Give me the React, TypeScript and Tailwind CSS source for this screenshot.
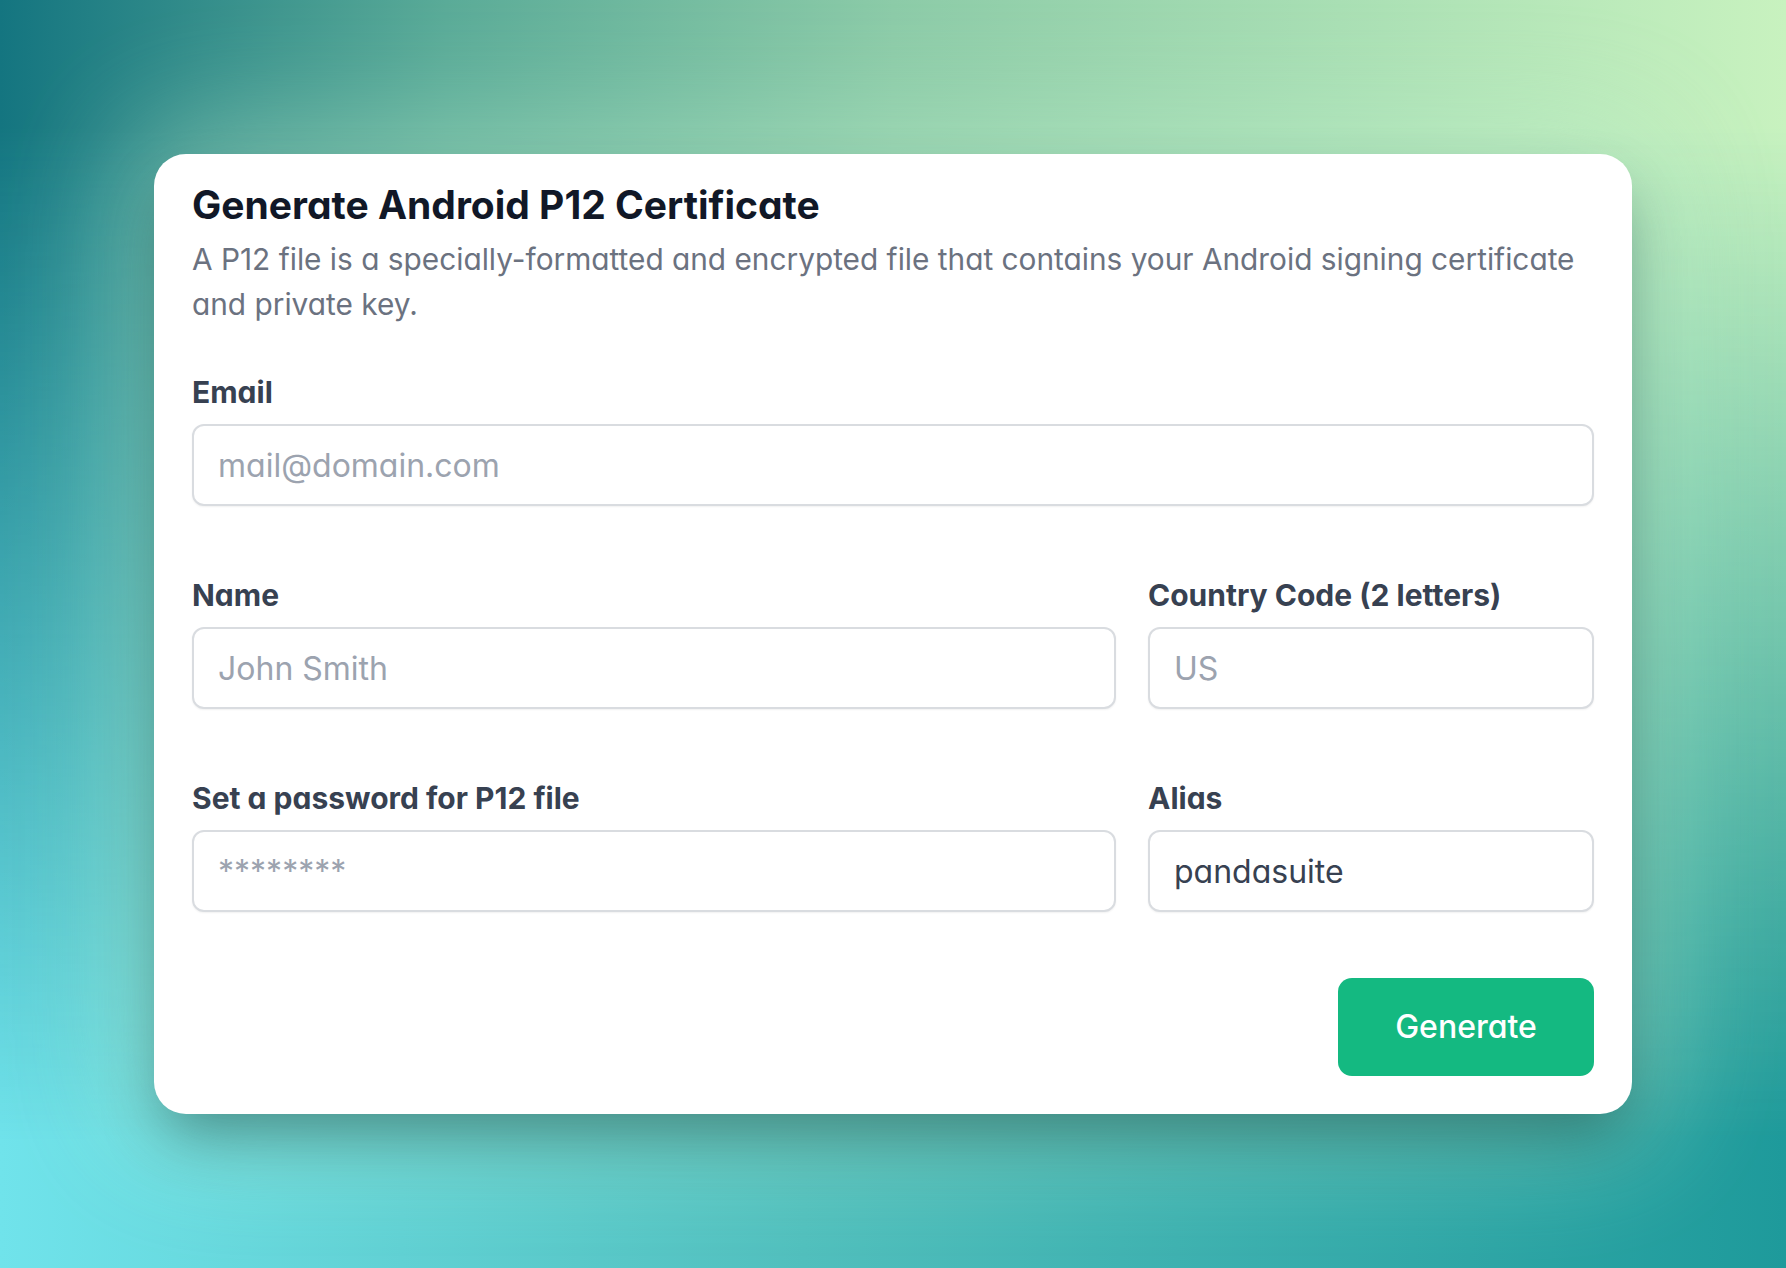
import React from 'react';

// Form field with label on top
function Field({
  label,
  placeholder,
  defaultValue,
  type = 'text',
}: {
  label: string;
  placeholder?: string;
  defaultValue?: string;
  type?: string;
}) {
  return (
    <div className="flex flex-col">
      <label className="mb-[15px] text-[30px] leading-[34px] font-bold text-[#374151]">{label}</label>
      <input
        type={type}
        placeholder={placeholder}
        defaultValue={defaultValue}
        className="h-[82px] w-full rounded-[12px] border-2 border-[#d9dce0] bg-white px-[24px] text-[32px] text-[#374151] placeholder:text-[#9ca3af] shadow-[0_1px_2px_rgba(0,0,0,0.06)] outline-none"
      />
    </div>
  );
}

export default function App() {
  return (
    <div className="relative h-screen w-full overflow-hidden bg-[linear-gradient(to_right,#70e3eb_0%,#50bfbd_45%,#1e9a9b_100%)] font-['Inter',sans-serif] [font-feature-settings:'cv11']">
      {/* top half of the background blends teal into soft green */}
      <div className="absolute inset-0 bg-[linear-gradient(to_right,#147580_0%,#5aab98_25%,#8ccba8_50%,#a9dfb4_75%,#c8f2bf_100%)] [mask-image:linear-gradient(to_bottom,black_10%,transparent_90%)]"></div>

      <div className="relative flex h-full items-center justify-center">
        <div className="w-[1478px] rounded-[32px] bg-white px-[38px] pt-[27px] pb-[38px] shadow-[0_30px_60px_-10px_rgba(0,50,50,0.45),0_0_120px_30px_rgba(190,240,205,0.45)]">
          <h1 className="text-[39px] leading-[48px] font-bold text-[#111827]">Generate Android P12 Certificate</h1>
          <p className="mt-[8px] text-[29.8px] leading-[45px] text-[#6b7280]">
            A P12 file is a specially-formatted and encrypted file that contains your Android signing certificate and private key.
          </p>

          <div className="mt-[48px] flex flex-col gap-[72px]">
            <Field label="Email" placeholder="mail@domain.com" type="email" />
            <div className="grid grid-cols-[1fr_446px] gap-[32px]">
              <Field label="Name" placeholder="John Smith" />
              <Field label="Country Code (2 letters)" placeholder="US" />
            </div>
            <div className="grid grid-cols-[1fr_446px] gap-[32px]">
              <Field label="Set a password for P12 file" placeholder="********" type="password" />
              <Field label="Alias" defaultValue="pandasuite" />
            </div>
          </div>

          <div className="mt-[66px] flex justify-end">
            <button className="h-[98px] w-[256px] rounded-[14px] bg-[#14b981] text-[32px] font-medium text-white">
              Generate
            </button>
          </div>
        </div>
      </div>
    </div>
  );
}
